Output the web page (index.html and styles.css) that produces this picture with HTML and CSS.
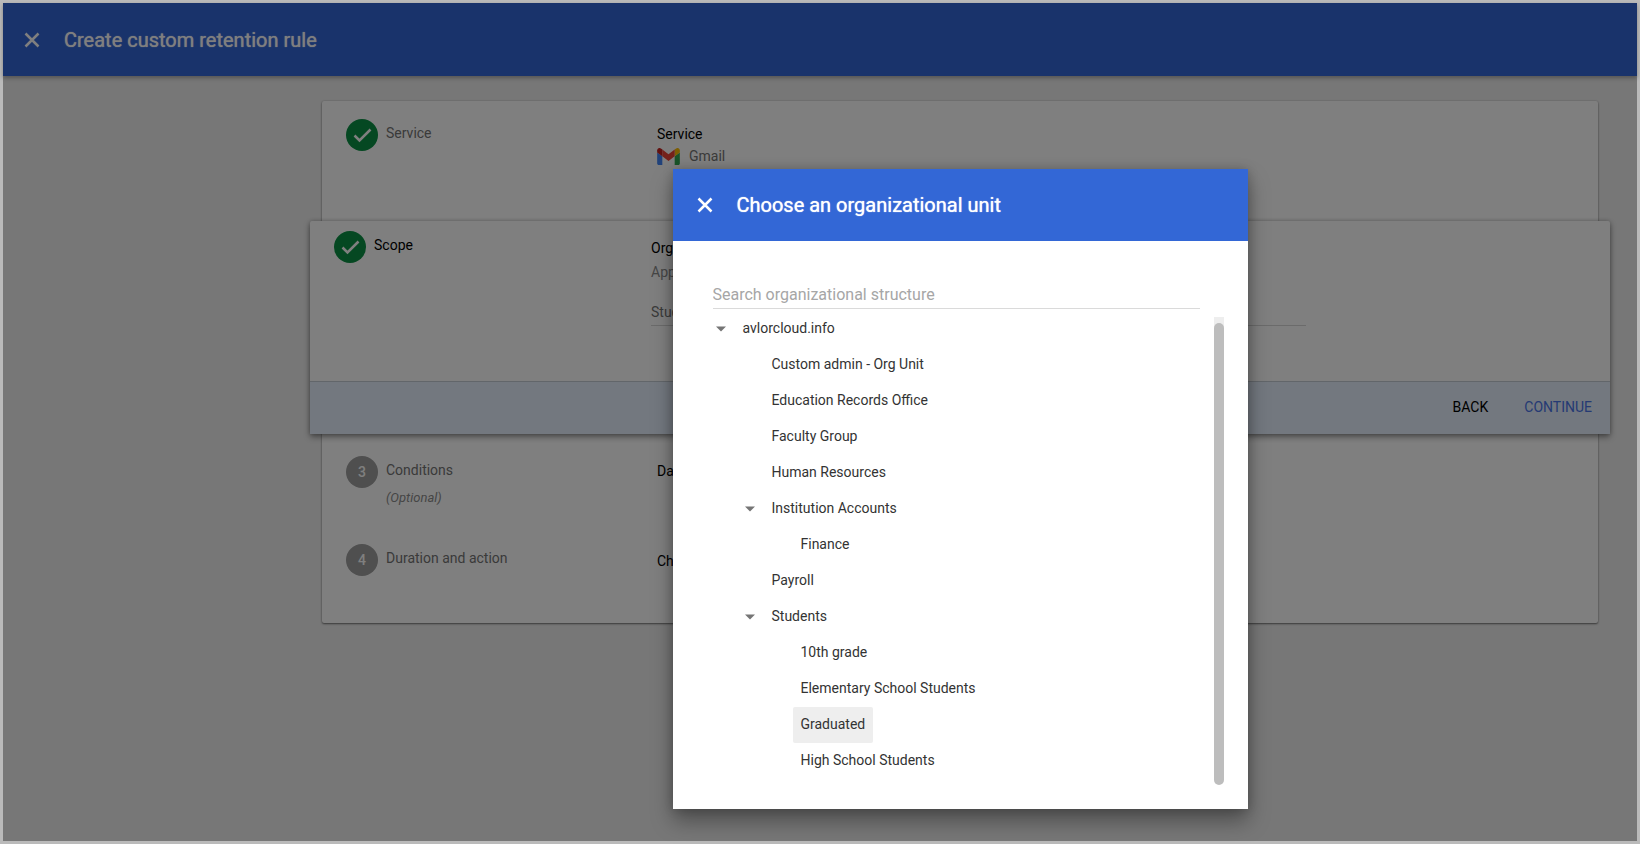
FILE: index.html
```html
<!DOCTYPE html>
<html lang="en">
<head>
<meta charset="utf-8">
<title>Create custom retention rule</title>
<link rel="stylesheet" href="styles.css">
</head>
<body>
<svg class="defs" aria-hidden="true">
  <symbol id="close" viewBox="0 0 16 16"><path d="M1.500 1.500l13 13M14.500 1.500l-13 13" fill="none" stroke="currentColor" stroke-width="2.500"/></symbol>
  <symbol id="check" viewBox="0 0 32 32"><path d="M8.500 16.500l5 5L24.500 10.500" fill="none" stroke="currentColor" stroke-width="2.500"/></symbol>
  <symbol id="caret" viewBox="0 0 16 16"><path d="M3 5.500h10L8 10.500z" fill="currentColor"/></symbol>
</svg>

<div class="app">
  <header class="bar bar-page">
    <button class="close" type="button" aria-label="Close"><svg><use href="#close"/></svg></button>
    <h1 class="title">Create custom retention rule</h1>
  </header>

  <main class="content">
    <div class="stepper">
      <section class="step step-service">
        <div class="step-name">
          <span class="badge badge-done"><svg><use href="#check"/></svg></span>
          <span class="label">Service</span>
        </div>
        <div class="detail">
          <h2 class="heading">Service</h2>
          <p class="service">
            <svg class="gmail" viewBox="52 42 88 66" aria-hidden="true">
              <path fill="#4285f4" d="M58 108h14V74L52 59v43c0 3.320 2.690 6 6 6"/>
              <path fill="#34a853" d="M120 108h14c3.320 0 6-2.690 6-6V59l-20 15"/>
              <path fill="#fbbc04" d="M120 48v26l20-15v-8c0-7.420-8.470-11.650-14.400-7.200"/>
              <path fill="#ea4335" d="M72 74V48l24 18 24-18v26L96 92"/>
              <path fill="#c5221f" d="M52 51v8l20 15V48l-5.600-4.200c-5.940-4.450-14.400-.22-14.400 7.200"/>
            </svg>
            Gmail
          </p>
        </div>
      </section>

      <section class="step step-scope">
        <div class="scope-main">
          <div class="step-name">
            <span class="badge badge-done"><svg><use href="#check"/></svg></span>
            <span class="label label-active">Scope</span>
          </div>
          <div class="detail">
            <h2 class="heading">Organizational unit</h2>
            <p class="hint">Applies to the unit</p>
            <p class="field">Students</p>
          </div>
        </div>
        <div class="actions">
          <button class="action" type="button">BACK</button>
          <button class="action action-primary" type="button">CONTINUE</button>
        </div>
      </section>

      <section class="step step-conditions">
        <div class="step-name">
          <span class="badge">3</span>
          <span class="label">Conditions<em class="optional">(Optional)</em></span>
        </div>
        <div class="detail"><h2 class="heading">Dates</h2></div>
      </section>

      <section class="step step-duration">
        <div class="step-name">
          <span class="badge">4</span>
          <span class="label">Duration and action</span>
        </div>
        <div class="detail"><h2 class="heading">Choose</h2></div>
      </section>
    </div>
  </main>

  <div class="scrim">
    <div class="dialog" role="dialog" aria-modal="true" aria-labelledby="dialog-title">
      <header class="bar">
        <button class="close" type="button" aria-label="Close dialog"><svg><use href="#close"/></svg></button>
        <h2 class="title" id="dialog-title">Choose an organizational unit</h2>
      </header>
      <div class="dialog-body">
        <input class="search" type="text" placeholder="Search organizational structure" aria-label="Search organizational structure">
        <div class="tree-area">
          <ul class="tree">
            <li>
              <div class="row"><button class="toggle" type="button" aria-label="Collapse avlorcloud.info"><svg><use href="#caret"/></svg></button><button class="unit" type="button">avlorcloud.info</button></div>
              <ul>
                <li><div class="row"><button class="unit" type="button">Custom admin - Org Unit</button></div></li>
                <li><div class="row"><button class="unit" type="button">Education Records Office</button></div></li>
                <li><div class="row"><button class="unit" type="button">Faculty Group</button></div></li>
                <li><div class="row"><button class="unit" type="button">Human Resources</button></div></li>
                <li>
                  <div class="row"><button class="toggle" type="button" aria-label="Collapse Institution Accounts"><svg><use href="#caret"/></svg></button><button class="unit" type="button">Institution Accounts</button></div>
                  <ul>
                    <li><div class="row"><button class="unit" type="button">Finance</button></div></li>
                  </ul>
                </li>
                <li><div class="row"><button class="unit" type="button">Payroll</button></div></li>
                <li>
                  <div class="row"><button class="toggle" type="button" aria-label="Collapse Students"><svg><use href="#caret"/></svg></button><button class="unit" type="button">Students</button></div>
                  <ul>
                    <li><div class="row"><button class="unit" type="button">10th grade</button></div></li>
                    <li><div class="row"><button class="unit" type="button">Elementary School Students</button></div></li>
                    <li><div class="row"><button class="unit unit-selected" type="button">Graduated</button></div></li>
                    <li><div class="row"><button class="unit" type="button">High School Students</button></div></li>
                  </ul>
                </li>
              </ul>
            </li>
          </ul>
          <div class="scrollbar" aria-hidden="true"><div class="thumb"></div></div>
        </div>
      </div>
    </div>
  </div>
</div>
</body>
</html>
```

FILE: styles.css
```css
* { box-sizing: border-box; }

body {
  margin: 0;
  font: 14px/20px Roboto, "Liberation Sans", sans-serif;
  color: #333;
}

h1, h2, p, ul { margin: 0; padding: 0; font: inherit; }
ul { list-style: none; }
button { font: inherit; color: inherit; background: none; border: 0; padding: 0; cursor: pointer; }
.defs { display: none; }

.app {
  position: relative;
  min-height: 100vh;
  border: 3px solid #bababa;
  background: #eee;
}

.bar {
  display: flex;
  align-items: center;
  gap: 24px;
  height: 72px;
  padding: 0 24px;
  background: #3367d6;
  color: #fff;
}
.bar-page { height: 73px; padding: 0 21px; box-shadow: 0 2px 4px rgba(0, 0, 0, .3); }
.close { display: flex; width: 16px; height: 16px; }
.close svg { width: 16px; height: 16px; }
.title { font-size: 20px; line-height: 24px; text-shadow: 0 0 1px currentColor; }

.content { padding: 25px 39px 24px 319px; }
.stepper {
  background: #fff;
  border-radius: 2px;
  box-shadow: 0 1px 2px rgba(0, 0, 0, .5), 0 0 2px rgba(0, 0, 0, .15);
}
.step { display: flex; padding: 0 24px; }
.step-service { height: 120px; padding-top: 18px; }
.step-conditions { height: 88px; padding-top: 22px; }
.step-duration { height: 101px; padding-top: 22px; }

.step-name { display: flex; gap: 8px; width: 311px; flex: none; }
.badge {
  display: flex;
  align-items: center;
  justify-content: center;
  flex: none;
  width: 32px;
  height: 32px;
  border-radius: 50%;
  background: #9e9e9e;
  color: #fff;
  font-weight: 500;
}
.badge svg { width: 32px; height: 32px; }
.badge-done { background: #0b9044; }
.label { padding-top: 4px; color: #757575; }
.label-active { color: #000; }
.optional { display: block; padding-top: 8px; font-size: 13px; color: #8c8c8c; }
.detail { flex: 1; padding-top: 5px; }
.step-duration .detail { padding-top: 7px; }
.heading { color: #000; }
.service { display: flex; align-items: center; gap: 9px; padding-top: 2px; color: #757575; }
.gmail { width: 23px; height: 17px; }

.step-scope {
  position: relative;
  flex-direction: column;
  margin: 0 -12px;
  padding: 0;
  border-radius: 2px;
  background: #fff;
  box-shadow: 0 3px 6px rgba(0, 0, 0, .4), 0 0 4px rgba(0, 0, 0, .2);
}
.scope-main { display: flex; height: 160px; padding: 10px 24px 0; }
.step-scope .step-name { width: 317px; }
.step-scope .detail { padding-top: 7px; }
.hint { padding-top: 4px; color: #8c8c8c; }
.field { max-width: 655px; padding: 20px 0 3px; border-bottom: 1px solid #d6d6d6; color: #757575; }
.actions {
  display: flex;
  align-items: center;
  justify-content: flex-end;
  gap: 36px;
  height: 53px;
  padding: 0 18px 2px;
  border-top: 1px solid #c4ccd4;
  background: #e6f1fe;
}
.action { color: #000; }
.action-primary { color: #4a74e8; }

.scrim {
  position: absolute;
  inset: 0;
  display: flex;
  align-items: flex-start;
  justify-content: center;
  padding: 166px 39px 32px 319px;
  background: rgba(0, 0, 0, .5);
}
.dialog {
  width: 575px;
  background: #fff;
  box-shadow: 0 12px 20px rgba(0, 0, 0, .35), 0 0 10px rgba(0, 0, 0, .2);
}
.dialog-body { padding: 40px 24px 24px 40px; }
.search {
  display: block;
  width: calc(100% - 24px);
  height: 28px;
  padding: 0;
  border: 0;
  border-bottom: 1px solid #dadada;
  background: none;
  outline: 0;
  font: 16px/20px Roboto, "Liberation Sans", sans-serif;
}
.search::placeholder { color: #a6a6a6; opacity: 1; }
.tree-area { display: flex; justify-content: space-between; padding-top: 2px; }
.tree { padding-bottom: 6px; }
.tree ul { padding-left: 29px; }
.row { display: flex; align-items: center; height: 36px; }
.toggle { display: flex; width: 16px; margin-right: 6px; color: #757575; }
.toggle svg { width: 16px; height: 16px; }
.unit { height: 36px; padding: 0 8px 2px; border-radius: 2px; }
.unit:first-child { margin-left: 22px; }
.unit-selected { background: #eee; }
.scrollbar { width: 10px; margin-top: 6px; padding-top: 6px; background: linear-gradient(#eee 12px, transparent 12px); }
.thumb { height: 100%; border-radius: 5px; background: #bdbdbd; }
```
